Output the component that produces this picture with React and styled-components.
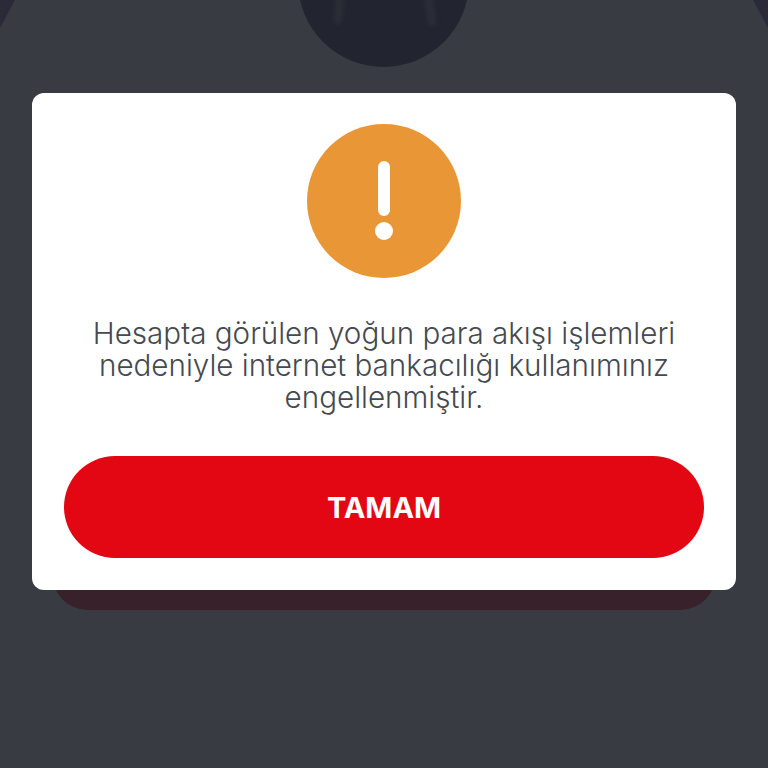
import styled, { createGlobalStyle } from "styled-components";

const GlobalStyle = createGlobalStyle`
  html, body {
    margin: 0;
    padding: 0;
    background: #383b42;
  }
`;

const Screen = styled.div`
  position: relative;
  width: 768px;
  height: 768px;
  overflow: hidden;
  box-sizing: border-box;
  padding: 93px 32px 0;
  background: #383b42;
  font-family: Inter, "Liberation Sans", sans-serif;
`;

const CornerShade = styled.div`
  position: absolute;
  top: 0;
  ${(p) => (p.$right ? "right: 0;" : "left: 0;")}
  width: 15px;
  height: 28px;
  background: #2b2a39;
  clip-path: ${(p) =>
    p.$right
      ? "polygon(0 0, 100% 0, 100% 100%)"
      : "polygon(0 0, 100% 0, 0 100%)"};
`;

const TopBadge = styled.svg`
  position: absolute;
  left: 298px;
  top: -104px;
  width: 171px;
  height: 171px;
`;

const Streak = styled.path`
  stroke: #2b2e37;
  stroke-width: 8px;
  stroke-linecap: round;
  filter: blur(2px);
`;

const CardStack = styled.div`
  position: relative;
`;

const BackCard = styled.div`
  position: absolute;
  left: 20px;
  right: 20px;
  bottom: -20px;
  height: 120px;
  border-radius: 36px;
  background: #39212b;
`;

const Card = styled.div`
  position: relative;
  display: flex;
  flex-direction: column;
  align-items: center;
  height: 497px;
  box-sizing: border-box;
  padding: 31px 32px 32px;
  border-radius: 12px;
  background: #ffffff;
`;

const WarningIcon = styled.svg`
  display: block;
  width: 154px;
  height: 154px;
`;

const Message = styled.p`
  margin: 39px 0 0;
  width: 640px;
  font-size: 29.6px;
  line-height: 32px;
  font-weight: 300;
  text-align: center;
  white-space: nowrap;
  color: #454a50;
`;

const ConfirmButton = styled.button`
  margin-top: auto;
  width: 640px;
  height: 102px;
  border: none;
  border-radius: 51px;
  background: #e30613;
  color: #ffffff;
  font-family: inherit;
  font-size: 29px;
  font-weight: 700;
`;

export default function App() {
  return (
    <Screen>
      <GlobalStyle />
      <CornerShade />
      <CornerShade $right />
      <TopBadge viewBox="0 0 171 171">
        <circle cx="85.5" cy="85.5" r="85.5" fill="#22252f" />
        <Streak d="M42 100 L40 124" />
        <Streak d="M130 100 L134 126" />
      </TopBadge>
      <CardStack>
        <BackCard />
        <Card>
          <WarningIcon viewBox="0 0 154 154">
            <circle cx="77" cy="77" r="77" fill="#e99637" />
            <rect x="71" y="37" width="12" height="55" rx="6" fill="#ffffff" />
            <circle cx="77" cy="107" r="9" fill="#ffffff" />
          </WarningIcon>
          <Message>
            Hesapta görülen yoğun para akışı işlemleri
            <br />
            nedeniyle internet bankacılığı kullanımınız
            <br />
            engellenmiştir.
          </Message>
          <ConfirmButton>TAMAM</ConfirmButton>
        </Card>
      </CardStack>
    </Screen>
  );
}
